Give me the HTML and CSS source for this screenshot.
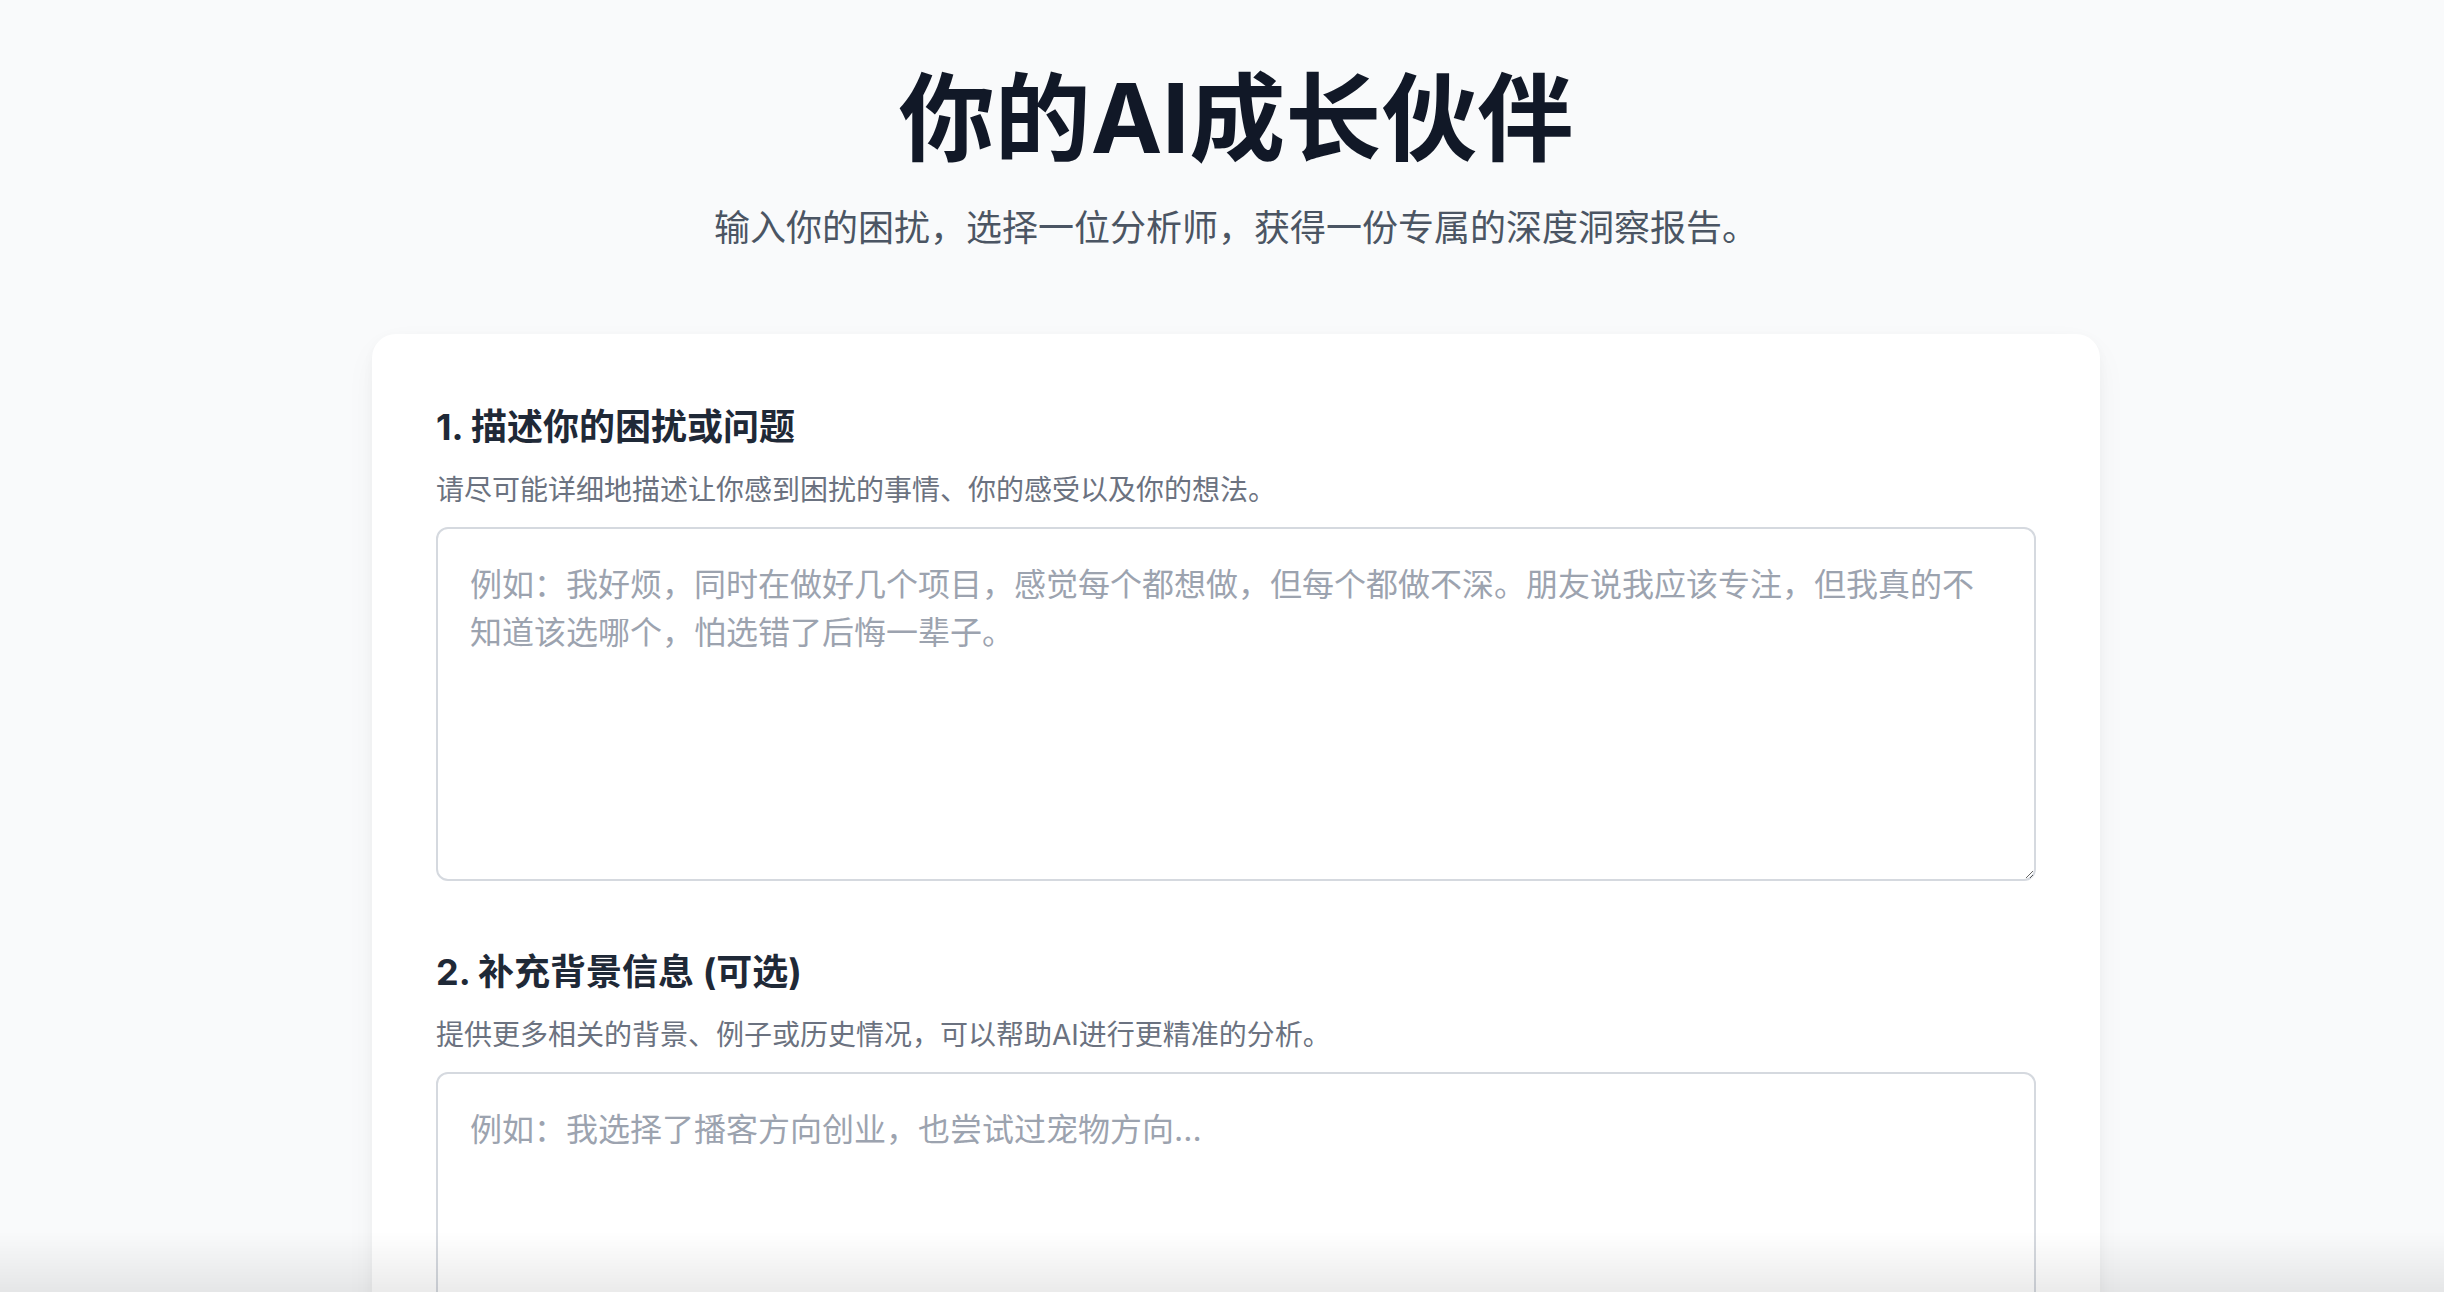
FILE: index.html
```html
<!DOCTYPE html>
<html lang="zh-CN">
<head>
  <meta charset="UTF-8" />
  <meta name="viewport" content="width=device-width, initial-scale=1.0"/>
  <title>你的AI成长伙伴</title>
  <link rel="stylesheet" href="styles.css">
</head>
<body>
  <div class="page">
    <header class="hero">
      <h1>你的AI成长伙伴</h1>
      <p>输入你的困扰，选择一位分析师，获得一份专属的深度洞察报告。</p>
    </header>

    <main class="card">
      <form id="analysisForm">
        <section class="field">
          <label for="problem">1. 描述你的困扰或问题</label>
          <p class="hint">请尽可能详细地描述让你感到困扰的事情、你的感受以及你的想法。</p>
          <textarea id="problem" name="problem" placeholder="例如：我好烦，同时在做好几个项目，感觉每个都想做，但每个都做不深。朋友说我应该专注，但我真的不知道该选哪个，怕选错了后悔一辈子。"></textarea>
        </section>

        <section class="field">
          <label for="context">2. 补充背景信息 (可选)</label>
          <p class="hint">提供更多相关的背景、例子或历史情况，可以帮助AI进行更精准的分析。</p>
          <textarea id="context" name="context" class="short" placeholder="例如：我选择了播客方向创业，也尝试过宠物方向..."></textarea>
        </section>
      </form>
    </main>
  </div>

  <div class="fade"></div>
</body>
</html>
```

FILE: styles.css
```css
body {
  margin: 0;
  padding: 0 0 0 28px;
  background-color: #f9fafb;
  font-family: Inter, "Noto Sans CJK SC", sans-serif;
}

.page {
  max-width: 1728px;
  margin: 0 auto;
}

.hero {
  text-align: center;
  padding-top: 70px;
}

.hero h1 {
  margin: 0;
  font-size: 96px;
  line-height: 96px;
  font-weight: 700;
  color: #111827;
}

.hero p {
  margin: 35px 0 0;
  font-size: 36px;
  line-height: 54px;
  color: #4b5563;
}

.card {
  display: block;
  margin-top: 79px;
  background-color: #fff;
  border-radius: 24px;
  padding: 66px 64px 64px;
  box-shadow: 0 12px 36px -6px rgba(0,0,0,0.06), 0 4px 12px rgba(0,0,0,0.03);
}

.field + .field {
  margin-top: 64px;
}

label {
  display: block;
  font-size: 36px;
  line-height: 54px;
  font-weight: 700;
  color: #1f2937;
}

.hint {
  margin: 16px 0 17px;
  font-size: 28px;
  line-height: 40px;
  color: #6b7280;
}

textarea {
  display: block;
  width: 100%;
  height: 354px;
  box-sizing: border-box;
  padding: 32px;
  border: 2px solid #d5d9df;
  border-radius: 12px;
  font: inherit;
  font-size: 32px;
  line-height: 48px;
  color: #1f2937;
  background-color: #fff;
  resize: vertical;
}

textarea.short {
  height: 260px;
}

textarea::placeholder {
  color: #9ca3af;
}

.fade {
  position: fixed;
  left: 0;
  right: 0;
  bottom: 0;
  height: 60px;
  background: linear-gradient(to bottom, rgba(0,0,0,0), rgba(0,0,0,0.08));
  pointer-events: none;
}
```
